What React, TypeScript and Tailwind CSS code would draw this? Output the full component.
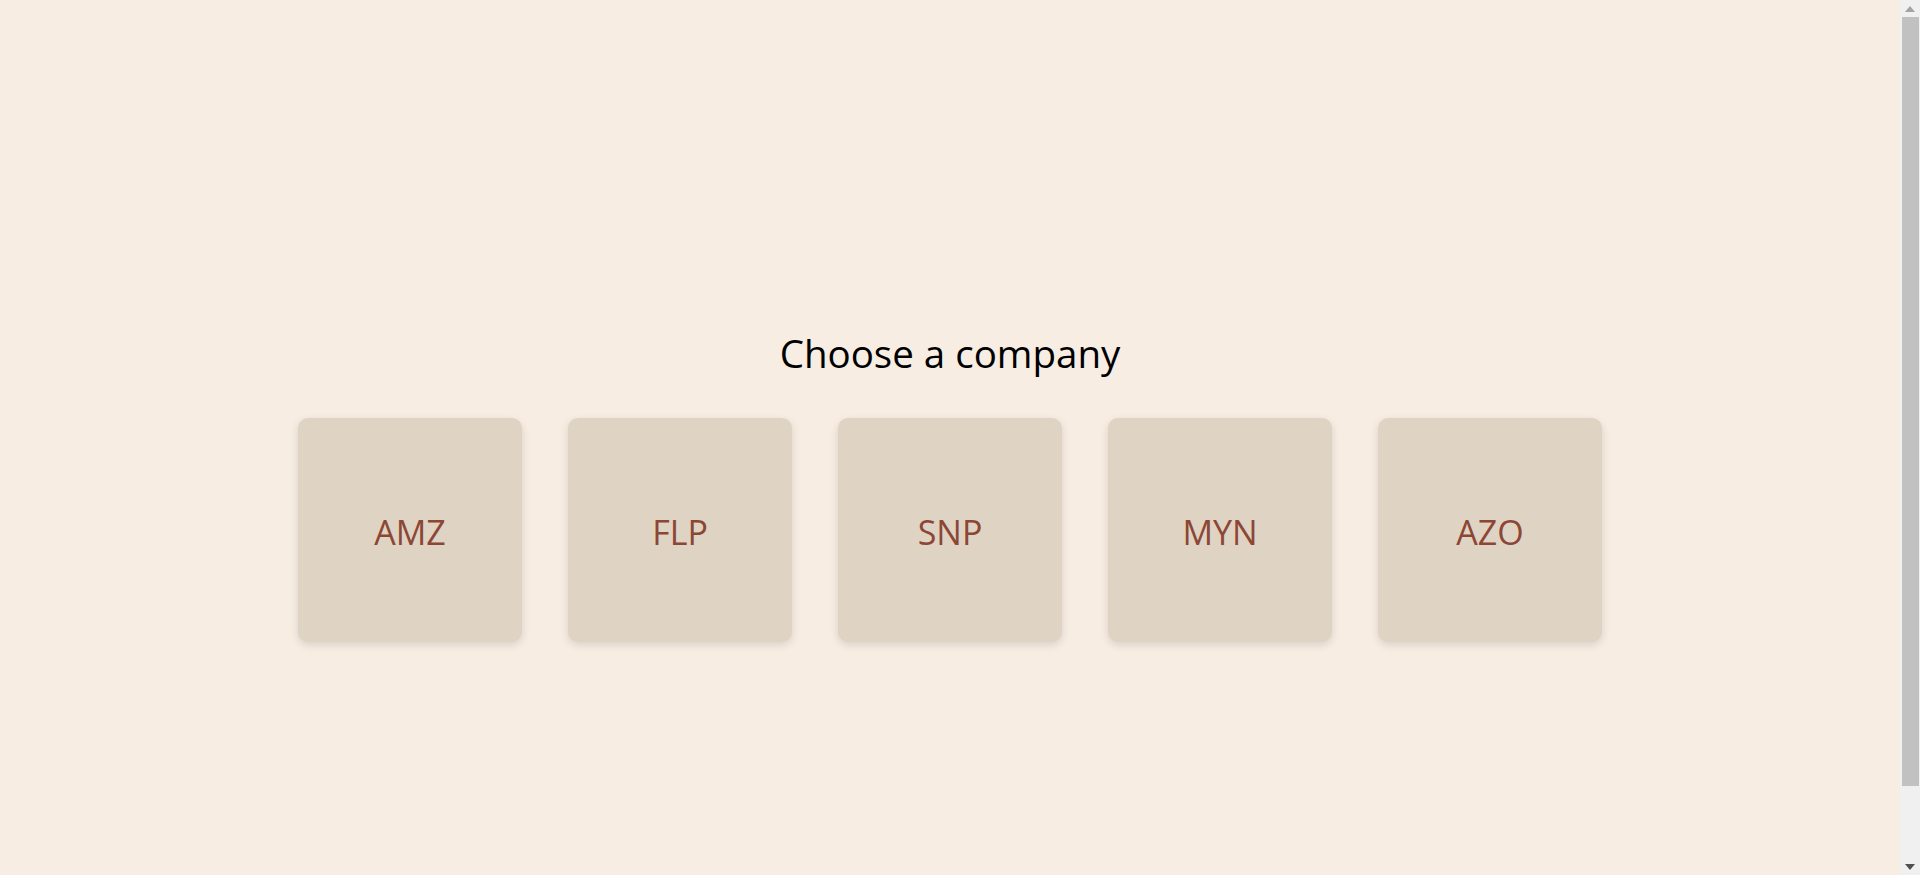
import React from "react";

const companies = ["AMZ", "FLP", "SNP", "MYN", "AZO"];

export default function App() {
  return (
    <div className="flex h-[875px] w-full overflow-hidden bg-[#f7ede3]" style={{ fontFamily: '"Open Sans", "Noto Sans", sans-serif' }}>
      <main className="flex flex-1 flex-col items-center pt-[329px]">
        <h1 className="text-[38.5px] leading-[48px] font-normal text-black">Choose a company</h1>
        <div className="mt-[41px] flex gap-[46px]">
          {companies.map((c) => (
            <button
              key={c}
              className="flex h-[224px] w-[224px] items-center justify-center rounded-[10px] bg-[#dfd3c3] pt-[4px] text-[34px] text-[#8c4636] shadow-[0_3px_8px_rgba(0,0,0,0.12)]"
            >
              {c}
            </button>
          ))}
        </div>
      </main>
      <div className="flex w-[20px] flex-col bg-[#f0f0f0]">
        <div className="flex h-[17px] items-center justify-center">
          <svg width="10" height="6" viewBox="0 0 10 6"><path d="M5 0 L10 6 L0 6 Z" fill="#a3a3a3" /></svg>
        </div>
        <div className="mx-auto h-[769px] w-[17px] bg-[#c1c1c1]" />
        <div className="flex-1" />
        <div className="flex h-[17px] items-center justify-center">
          <svg width="10" height="6" viewBox="0 0 10 6"><path d="M0 0 L10 0 L5 6 Z" fill="#505050" /></svg>
        </div>
      </div>
    </div>
  );
}
